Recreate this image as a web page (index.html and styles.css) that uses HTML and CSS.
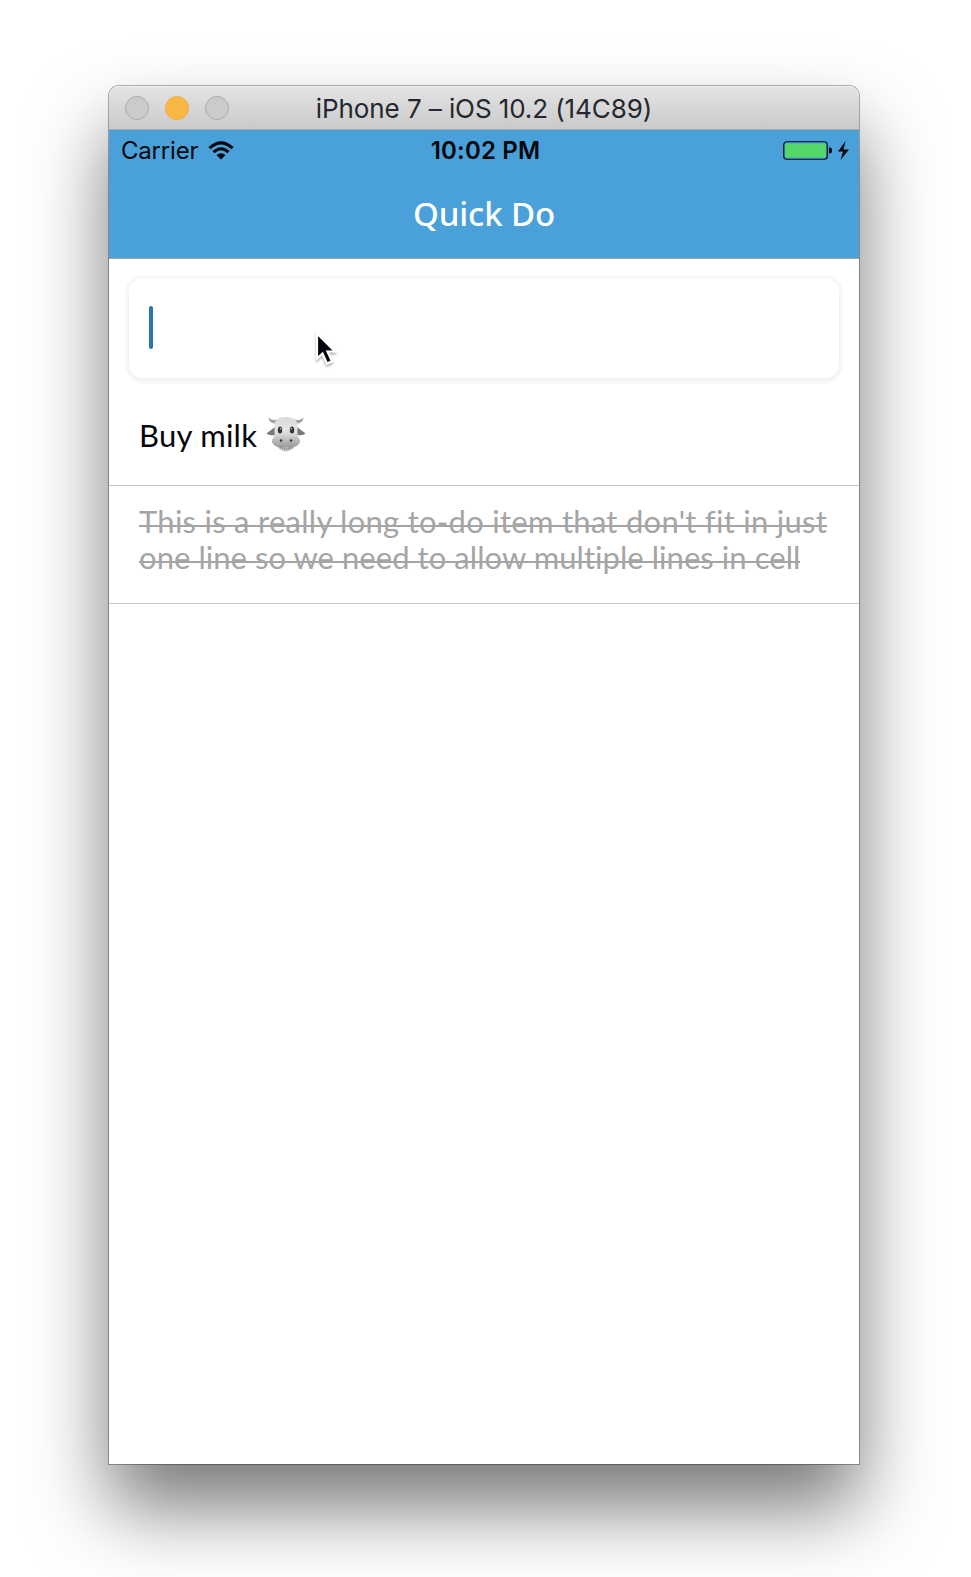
FILE: index.html
```html
<!DOCTYPE html>
<html lang="en">
<head>
<meta charset="utf-8">
<title>Quick Do</title>
<link rel="stylesheet" href="styles.css">
</head>
<body>
<main class="window">
  <header class="titlebar">
    <div class="lights"><i class="light"></i><i class="light minimize"></i><i class="light"></i></div>
    <span class="window-title">iPhone 7 – iOS 10.2 (14C89)</span>
  </header>
  <section class="navbar">
    <div class="status">
      <div class="carrier"><span class="carrier-name">Carrier</span>
        <svg class="wifi" width="26" height="20" viewBox="0 0 26 20"><g fill="none" stroke="#05070c" stroke-width="3"><path d="M1.5 7.2Q13-3.6 24.500 7.200"/><path d="M5.500 11.200Q13 4.200 20.500 11.200"/></g><path fill="#05070c" d="M8.500 14Q13 10.500 17.500 14L13 18.600Z"/></svg>
      </div>
      <span class="clock">10:02 PM</span>
      <div class="power">
        <svg width="67" height="20" viewBox="0 0 67 20"><rect x=".75" y=".75" width="43.500" height="17.500" rx="3" fill="none" stroke="#05070c" stroke-width="1.200"/><rect x="2" y="2.500" width="41" height="14" rx="1" fill="#53d769"/><path d="M46 6.500h1q2 0 2 3t-2 3h-1z" fill="#05070c"/><path d="M62.500 0L55 10.500h5L57.500 19 66 8.500h-5.500z" fill="#05070c"/></svg>
      </div>
    </div>
    <h1 class="app-title">Quick Do</h1>
  </section>
  <section class="content">
    <div class="entry"><span class="caret"></span></div>
    <div class="todo first"><span class="line buy">Buy milk</span>
      <svg class="cow" width="40" height="36" viewBox="0 0 40 36">
        <defs><linearGradient id="face" x2="0" y2="1"><stop stop-color="#d8d8d8"/><stop offset=".5" stop-color="#e6e6e6"/><stop offset="1" stop-color="#c4c4c4"/></linearGradient><linearGradient id="muzzle" x2="0" y2="1"><stop stop-color="#d2d2d2"/><stop offset="1" stop-color="#999"/></linearGradient></defs>
        <path d="M9 11L.5 17.500Q3 20 9 19zM31 11l8.500 6.500Q37 20 31 19z" fill="#777"/>
        <path d="M2.500 1Q5 5 12 3.500l1 4Q3 9 2.500 1zM37.500 1Q35 5 28 3.500l-1 4Q37 9 37.500 1z" fill="#a2a2a2"/>
        <path d="M10 28Q12 34 20 35.500Q28 34 30 28z" fill="#bcbcbc"/>
        <path d="M8.500 7Q11 1 20 1T31.500 7V21L30 25H10L8.500 21z" fill="url(#face)"/>
        <path d="M9 20Q20 18 31 20Q36 24 33 28Q29 32.500 20 31Q11 32.500 7 28Q4 24 9 20z" fill="url(#muzzle)"/>
        <ellipse cx="14" cy="14" rx="2.200" ry="3.500" fill="#30343a"/><ellipse cx="26" cy="14" rx="2.200" ry="3.500" fill="#30343a"/><circle cx="14.500" cy="12.800" r=".8" fill="#ddd"/><circle cx="25.500" cy="12.800" r=".8" fill="#ddd"/>
        <circle cx="15" cy="24.500" r="1.200" fill="#333"/><circle cx="25" cy="24.500" r="1.200" fill="#333"/>
        <path d="M14 31.500Q20 33.500 26 31.500" stroke="#888" stroke-width="1.500" stroke-dasharray="1 1" fill="none"/>
      </svg>
    </div>
    <div class="todo done"><span class="line l1">This is a really long to-do item that don't fit in just</span><span class="line l2">one line so we need to allow multiple lines in cell</span></div>
  </section>
  <svg class="pointer" width="28" height="38" viewBox="0 0 28 38"><path d="M3 2.500V27.500L8.500 22.500 13 32.500 18 30.300 13.500 20.500H21z" fill="#05070c" stroke="#fff" stroke-width="2.200"/></svg>
</main>
</body>
</html>
```
FILE: styles.css
```css
body { display: flow-root; margin: 0; height: 1577px; overflow: hidden; background: #fff; }
.window {
  position: relative; width: 750px; height: 1378px; margin: 86px 0 0 109px;
  display: flex; flex-direction: column; background: #fff;
  border-radius: 10px 10px 0 0;
  box-shadow: 0 0 0 1px rgba(0,0,0,.3), 0 44px 78px rgba(0,0,0,.53);
}
.titlebar {
  box-sizing: border-box; height: 44px; display: grid; grid-template-columns: 1fr auto 1fr; align-items: center;
  padding: 0 16px; border-bottom: 1px solid #adadad; border-radius: 10px 10px 0 0;
  background: linear-gradient(#e4e4e4, #cacaca); box-shadow: inset 0 1px #f3f3f3;
}
.lights { display: flex; gap: 16px; }
.light { box-sizing: border-box; width: 24px; height: 24px; border: 1px solid #acacac; border-radius: 50%; background: #cbcbcb; }
.minimize { background: #fab745; border-color: #efad43; }
.window-title { padding-top: 2px; font: 26px/42px Inter, sans-serif; letter-spacing: -.09px; color: #24282e; white-space: nowrap; }
.navbar { box-sizing: border-box; height: 129px; background: #4aa0d8; border-bottom: 1px solid #a5a5a5; }
.status { display: grid; grid-template-columns: 1fr auto 1fr; align-items: center; height: 42px; padding: 0 9px 0 12px; font: 24px/42px Inter, sans-serif; color: #05070c; }
.carrier { display: flex; align-items: center; gap: 10px; letter-spacing: -.2px; }
.clock { font-weight: 600; letter-spacing: .2px; }
.power { display: flex; justify-content: flex-end; }
.app-title { margin: 21px 0 0; text-align: center; font: 500 33px/42px "Noto Sans", sans-serif; letter-spacing: -.1px; color: #fff; }
.content { flex: 1; padding-top: 19px; }
.entry { box-sizing: border-box; height: 100px; margin: 0 20px; padding: 28px 20px; border-radius: 14px; background: #fff; box-shadow: 0 2px 0 1px #f2f4f4, 0 1.500px 0 4px #f6f7f7; }
.caret { display: block; width: 4px; height: 43px; border-radius: 2px; background: #2f72b2; }
.todo { box-sizing: border-box; padding: 0 30px; border-bottom: 1px solid #c6c6c6; font: 31px/36px Lato, sans-serif; font-variant-ligatures: none; color: #05070c; }
.first { display: flex; gap: 9px; height: 108px; padding-top: 39px; }
.cow { margin-top: -1px; }
.done { height: 118px; padding-top: 17px; color: #a5a5a5; }
.line { display: block; width: max-content; white-space: nowrap; }
.buy { letter-spacing: .25px; }
.l1 { letter-spacing: .27px; }
.l2 { letter-spacing: .05px; }
.done .line { background: linear-gradient(#a5a5a5, #a5a5a5) 0 22px / 100% 2px no-repeat; }
.pointer { position: absolute; left: 205px; top: 245px; filter: drop-shadow(0 2px 1px rgba(0,0,0,.3)); }
```
